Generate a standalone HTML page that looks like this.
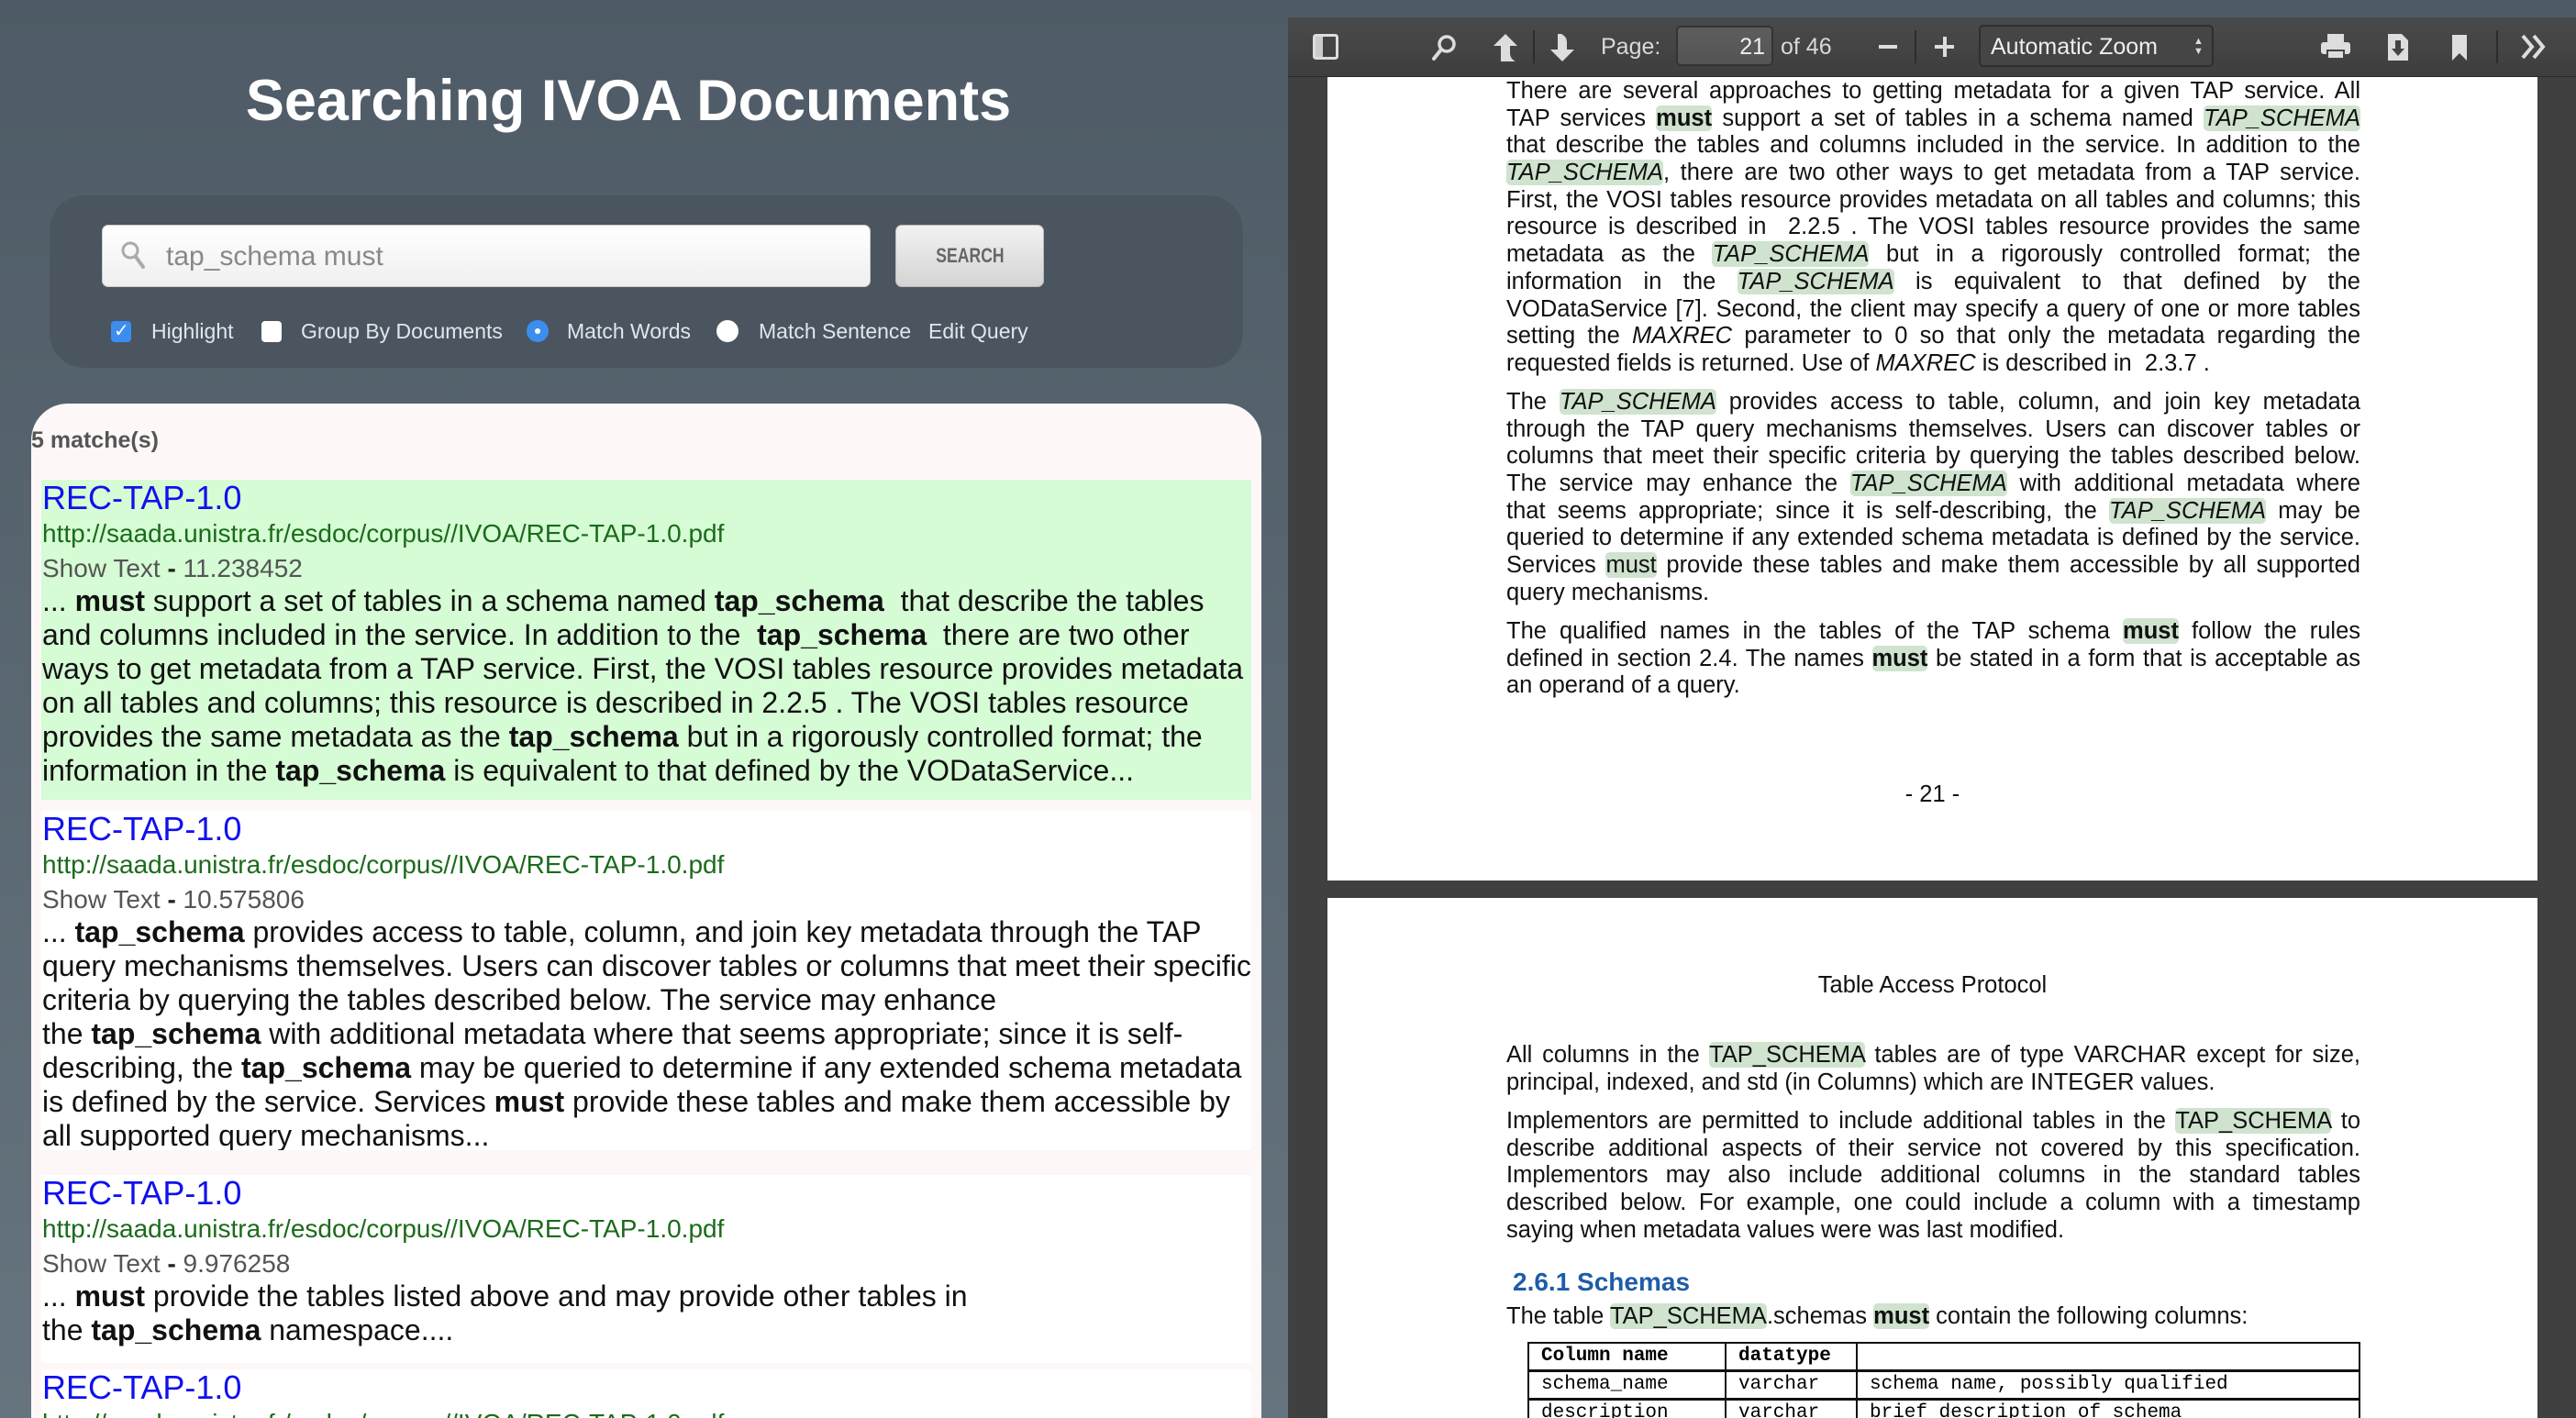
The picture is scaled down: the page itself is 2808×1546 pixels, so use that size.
<!DOCTYPE html>
<html><head><meta charset="utf-8">
<style>
*{margin:0;padding:0;box-sizing:border-box}
html,body{width:2808px;height:1546px;overflow:hidden}
body{font-family:"Liberation Sans",Arial,sans-serif}
#root{position:relative;width:2808px;height:1546px;overflow:hidden;background:linear-gradient(#4e5b66,#66747f)}
.a{position:absolute;white-space:nowrap}
#title{left:0;width:1370px;text-align:center;top:70px;font-size:63px;font-weight:bold;color:#fff;line-height:80px}
#panel{left:54px;top:213px;width:1301px;height:188px;background:#4a5560;border-radius:38px}
#inp{left:111px;top:245px;width:838px;height:68px;border-radius:7px;background:linear-gradient(#fff,#efefef);border:1px solid #ccc}
#btn{left:976px;top:245px;width:162px;height:68px;border-radius:7px;background:linear-gradient(#f2f2f2,#d4d4d4);border:1px solid #bbb;text-align:center;line-height:66px;font-size:22px;font-weight:bold;color:#666}
.opt{font-size:23px;color:#e2e6ea;top:346px;line-height:30px}
.cb{top:350px;width:22px;height:23px;border-radius:4px;background:#fff}
.rd{top:349px;width:24px;height:24px;border-radius:50%;background:#fff}
#res{left:34px;top:440px;width:1341px;height:1106px;background:#fdf8f7;border-radius:40px 40px 0 0}
.item{position:absolute;left:45px;width:1319px;padding-left:1px;background:#fff;overflow:hidden}
.item div{white-space:nowrap;line-height:37px}
.t{font-size:36px;color:#1010ee}
.u{font-size:28px;color:#1b6b1b}
.s{font-size:28px;color:#555}
.b{font-size:32px;color:#111}
#viewer{left:1404px;top:19px;width:1404px;height:1527px;background:#404040}
#tb{left:1404px;top:19px;width:1404px;height:64px;background:linear-gradient(#4a4a4a,#3e3e3e);box-shadow:0 1px 0 #2a2a2a}
.tt{color:#d9d9d9;font-size:25px;line-height:30px;top:36px}
.sep{top:33px;width:2px;height:36px;background:#2c2c2c}
.page{position:absolute;left:1447px;width:1319px;background:#fff}
.p{position:absolute;left:1642px;width:931px;font-size:25.5px;color:#111;line-height:29.7px}
.p div{text-align:justify;text-align-last:justify;height:29.7px}
.p div.l{text-align:left;text-align-last:left;white-space:nowrap}
.h{background:#cfe3cf;border-radius:5px}
.mono{font-family:"Liberation Mono",monospace;font-size:21px}
</style></head><body><div id="root">
<div class="a" id="title">Searching IVOA Documents</div>
<div class="a" id="panel"></div>
<div class="a" id="inp"></div>
<svg class="a" style="left:131px;top:262px" width="28" height="34" viewBox="0 0 28 34"><circle cx="11" cy="11" r="8" fill="none" stroke="#aaa" stroke-width="3"/><line x1="17" y1="18" x2="25" y2="29" stroke="#aaa" stroke-width="4" stroke-linecap="round"/></svg>
<div class="a" style="left:181px;top:262px;font-size:30px;color:#888;line-height:36px">tap_schema must</div>
<div class="a" id="btn"><span style="display:inline-block;transform:scaleX(.8)">SEARCH</span></div>
<div class="a cb" style="left:121px;background:#3b8ef0"></div>
<div class="a" style="left:124px;top:347px;color:#fff;font-size:20px;line-height:28px">✓</div>
<div class="a opt" style="left:165px">Highlight</div>
<div class="a cb" style="left:285px"></div>
<div class="a opt" style="left:328px">Group By Documents</div>
<div class="a rd" style="left:574px;background:#3b8ef0"></div>
<div class="a" style="left:583px;top:358px;width:6px;height:6px;border-radius:50%;background:#fff"></div>
<div class="a opt" style="left:618px">Match Words</div>
<div class="a rd" style="left:781px"></div>
<div class="a opt" style="left:827px">Match Sentence</div>
<div class="a opt" style="left:1012px">Edit Query</div>

<div class="a" id="res"></div>
<div class="a" style="left:34px;top:465px;font-size:25px;font-weight:bold;color:#555;line-height:30px">5 matche(s)</div>

<div class="item" style="top:523px;height:349px;background:#d5fcd5;padding-top:1px">
<div class="t">REC-TAP-1.0</div>
<div class="u" style="line-height:42px">http://saada.unistra.fr/esdoc/corpus//IVOA/REC-TAP-1.0.pdf</div>
<div class="s" style="line-height:34px">Show Text <b style="color:#222">-</b> 11.238452</div>
<div class="b">... <b>must</b> support a set of tables in a schema named <b>tap_schema</b>&nbsp; that describe the tables</div>
<div class="b">and columns included in the service. In addition to the&nbsp; <b>tap_schema</b>&nbsp; there are two other</div>
<div class="b">ways to get metadata from a TAP service. First, the VOSI tables resource provides metadata</div>
<div class="b">on all tables and columns; this resource is described in 2.2.5 . The VOSI tables resource</div>
<div class="b">provides the same metadata as the <b>tap_schema</b> but in a rigorously controlled format; the</div>
<div class="b">information in the <b>tap_schema</b> is equivalent to that defined by the VODataService...</div>
</div>

<div class="item" style="top:884px;height:370px;padding-top:1px">
<div class="t">REC-TAP-1.0</div>
<div class="u" style="line-height:42px">http://saada.unistra.fr/esdoc/corpus//IVOA/REC-TAP-1.0.pdf</div>
<div class="s" style="line-height:34px">Show Text <b style="color:#222">-</b> 10.575806</div>
<div class="b">... <b>tap_schema</b> provides access to table, column, and join key metadata through the TAP</div>
<div class="b">query mechanisms themselves. Users can discover tables or columns that meet their specific</div>
<div class="b">criteria by querying the tables described below. The service may enhance</div>
<div class="b">the <b>tap_schema</b> with additional metadata where that seems appropriate; since it is self-</div>
<div class="b">describing, the <b>tap_schema</b> may be queried to determine if any extended schema metadata</div>
<div class="b">is defined by the service. Services <b>must</b> provide these tables and make them accessible by</div>
<div class="b">all supported query mechanisms...</div>
</div>

<div class="item" style="top:1281px;height:205px;padding-top:1px">
<div class="t">REC-TAP-1.0</div>
<div class="u" style="line-height:42px">http://saada.unistra.fr/esdoc/corpus//IVOA/REC-TAP-1.0.pdf</div>
<div class="s" style="line-height:34px">Show Text <b style="color:#222">-</b> 9.976258</div>
<div class="b">... <b>must</b> provide the tables listed above and may provide other tables in</div>
<div class="b">the <b>tap_schema</b> namespace....</div>
</div>

<div class="item" style="top:1493px;height:53px;padding-top:1px">
<div class="t">REC-TAP-1.0</div>
<div class="u" style="line-height:42px">http://saada.unistra.fr/esdoc/corpus//IVOA/REC-TAP-1.0.pdf</div>
</div>

<div class="a" id="viewer"></div>
<div class="page" style="top:83px;height:877px"></div>
<div class="page" style="top:979px;height:567px"></div>
<div class="a" id="tb"></div>
<svg class="a" style="left:1431px;top:37px" width="28" height="28" viewBox="0 0 28 28"><rect x="1.5" y="1.5" width="25" height="25" rx="2" fill="none" stroke="#ddd" stroke-width="3"/><rect x="3" y="3" width="8" height="22" fill="#ccc"/></svg>
<svg class="a" style="left:1560px;top:37px" width="28" height="30" viewBox="0 0 28 30"><circle cx="17" cy="11" r="8" fill="none" stroke="#ddd" stroke-width="3.5"/><line x1="11" y1="17" x2="3" y2="27" stroke="#ddd" stroke-width="4" stroke-linecap="round"/></svg>
<svg class="a" style="left:1627px;top:36px" width="28" height="32" viewBox="0 0 28 32"><path d="M14 1 L27 14 H19 V22 Q19 28 25 31 H9 V14 H1 Z" fill="#ddd"/></svg>
<div class="a sep" style="left:1671px"></div>
<svg class="a" style="left:1689px;top:36px" width="28" height="32" viewBox="0 0 28 32"><path d="M14 31 L27 18 H19 V10 Q19 4 13 1 H9 V18 H1 Z" fill="#ddd"/></svg>
<div class="a tt" style="left:1745px">Page:</div>
<div class="a" style="left:1827px;top:28px;width:106px;height:44px;border-radius:5px;background:linear-gradient(#5d5d5d,#545454);border:2px solid #333"></div>
<div class="a tt" style="left:1827px;width:97px;text-align:right;color:#eee">21</div>
<div class="a tt" style="left:1941px">of 46</div>
<div class="a" style="left:2048px;top:49px;width:20px;height:4px;background:#ddd"></div>
<div class="a sep" style="left:2087px"></div>
<div class="a" style="left:2109px;top:49px;width:21px;height:4px;background:#ddd"></div>
<div class="a" style="left:2118px;top:40px;width:4px;height:22px;background:#ddd"></div>
<div class="a" style="left:2157px;top:27px;width:256px;height:46px;border-radius:5px;background:#454545;border:2px solid #2e2e2e"></div>
<div class="a tt" style="left:2170px;color:#eee">Automatic Zoom</div>
<div class="a" style="left:2391px;top:40px;font-size:11px;color:#ddd;line-height:11px">▲<br>▼</div>
<svg class="a" style="left:2529px;top:36px" width="34" height="30" viewBox="0 0 34 30"><rect x="8" y="1" width="18" height="9" fill="#ddd"/><rect x="1" y="10" width="32" height="13" rx="3" fill="#ddd"/><rect x="8" y="19" width="18" height="9" fill="#ddd" stroke="#444" stroke-width="2"/></svg>
<svg class="a" style="left:2602px;top:36px" width="24" height="31" viewBox="0 0 24 31"><path d="M1 1 H16 L23 8 V30 H1 Z" fill="#ddd"/><path d="M9 8 H15 V17 H19 L12 25 L5 17 H9 Z" fill="#444"/></svg>
<svg class="a" style="left:2672px;top:37px" width="18" height="30" viewBox="0 0 18 30"><path d="M1 1 H17 V29 L9 21 L1 29 Z" fill="#ddd"/></svg>
<div class="a sep" style="left:2721px"></div>
<svg class="a" style="left:2748px;top:36px" width="30" height="30" viewBox="0 0 30 30"><path d="M2 3 L12 15 L2 27 M14 3 L24 15 L14 27" fill="none" stroke="#ddd" stroke-width="4"/></svg>

<div class="p" style="top:85px">
<div>There are several approaches to getting metadata for a given TAP service. All</div>
<div>TAP services <b class="h">must</b> support a set of tables in a schema named <i class="h">TAP_SCHEMA</i></div>
<div>that describe the tables and columns included in the service. In addition to the</div>
<div><i class="h">TAP_SCHEMA</i>, there are two other ways to get metadata from a TAP service.</div>
<div>First, the VOSI tables resource provides metadata on all tables and columns; this</div>
<div>resource is described in &nbsp;2.2.5 . The VOSI tables resource provides the same</div>
<div>metadata as the <i class="h">TAP_SCHEMA</i> but in a rigorously controlled format; the</div>
<div>information in the <i class="h">TAP_SCHEMA</i> is equivalent to that defined by the</div>
<div>VODataService [7]. Second, the client may specify a query of one or more tables</div>
<div>setting the <i>MAXREC</i> parameter to 0 so that only the metadata regarding the</div>
<div class="l">requested fields is returned. Use of <i>MAXREC</i> is described in &nbsp;2.3.7 .</div>
</div>
<div class="p" style="top:424px">
<div>The <i class="h">TAP_SCHEMA</i> provides access to table, column, and join key metadata</div>
<div>through the TAP query mechanisms themselves. Users can discover tables or</div>
<div>columns that meet their specific criteria by querying the tables described below.</div>
<div>The service may enhance the <i class="h">TAP_SCHEMA</i> with additional metadata where</div>
<div>that seems appropriate; since it is self-describing, the <i class="h">TAP_SCHEMA</i> may be</div>
<div>queried to determine if any extended schema metadata is defined by the service.</div>
<div>Services <span class="h">must</span> provide these tables and make them accessible by all supported</div>
<div class="l">query mechanisms.</div>
</div>
<div class="p" style="top:674px">
<div>The qualified names in the tables of the TAP schema <b class="h">must</b> follow the rules</div>
<div>defined in section 2.4. The names <b class="h">must</b> be stated in a form that is acceptable as</div>
<div class="l">an operand of a query.</div>
</div>
<div class="a" style="left:1447px;width:1319px;text-align:center;top:851px;font-size:25.5px;line-height:30px;color:#111">- 21 -</div>

<div class="a" style="left:1447px;width:1319px;text-align:center;top:1059px;font-size:25.5px;line-height:30px;color:#111">Table Access Protocol</div>
<div class="p" style="top:1136px">
<div>All columns in the <span class="h">TAP_SCHEMA</span> tables are of type VARCHAR except for size,</div>
<div class="l">principal, indexed, and std (in Columns) which are INTEGER values.</div>
</div>
<div class="p" style="top:1208px">
<div>Implementors are permitted to include additional tables in the <span class="h">TAP_SCHEMA</span> to</div>
<div>describe additional aspects of their service not covered by this specification.</div>
<div>Implementors may also include additional columns in the standard tables</div>
<div>described below. For example, one could include a column with a timestamp</div>
<div class="l">saying when metadata values were was last modified.</div>
</div>
<div class="a" style="left:1649px;top:1382px;font-size:28px;font-weight:bold;color:#1f5ca8;line-height:32px">2.6.1 Schemas</div>
<div class="p" style="top:1421px"><div class="l">The table <span class="h">TAP_SCHEMA</span>.schemas <b class="h">must</b> contain the following columns:</div></div>
<div class="a" style="left:1665px;top:1463px;width:908px;height:120px;border:2px solid #111"></div>
<div class="a" style="left:1665px;top:1493px;width:908px;height:3px;background:#111"></div>
<div class="a" style="left:1665px;top:1524px;width:908px;height:3px;background:#111"></div>
<div class="a" style="left:1880px;top:1463px;width:2px;height:90px;background:#111"></div>
<div class="a" style="left:2023px;top:1463px;width:2px;height:90px;background:#111"></div>
<div class="a mono" style="left:1680px;top:1466px;font-weight:bold;line-height:26px">Column name</div>
<div class="a mono" style="left:1895px;top:1466px;font-weight:bold;line-height:26px">datatype</div>
<div class="a mono" style="left:1680px;top:1497px;line-height:26px">schema_name</div>
<div class="a mono" style="left:1895px;top:1497px;line-height:26px">varchar</div>
<div class="a mono" style="left:2038px;top:1497px;line-height:26px">schema name, possibly qualified</div>
<div class="a mono" style="left:1680px;top:1528px;line-height:26px">description</div>
<div class="a mono" style="left:1895px;top:1528px;line-height:26px">varchar</div>
<div class="a mono" style="left:2038px;top:1528px;line-height:26px">brief description of schema</div>
</div></body></html>
